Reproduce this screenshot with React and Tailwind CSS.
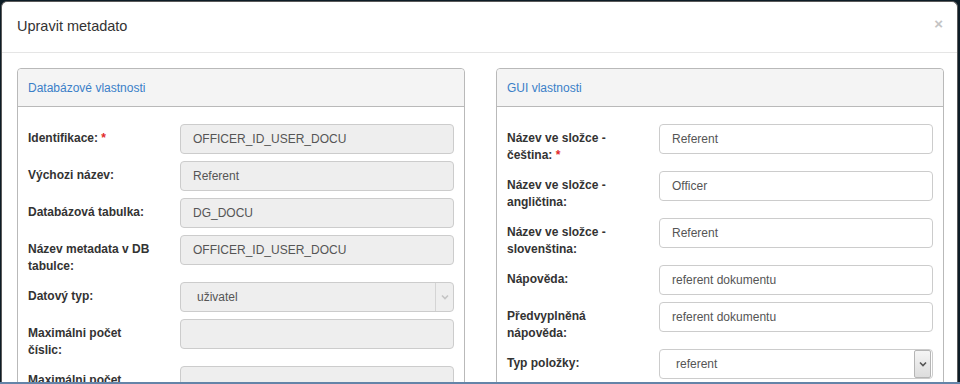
import React from "react";

const leftRows = [
  { label: "Identifikace:", required: true, value: "OFFICER_ID_USER_DOCU" },
  { label: "Výchozi název:", value: "Referent" },
  { label: "Databázová tabulka:", value: "DG_DOCU" },
  { label: "Název metadata v DB tabulce:", value: "OFFICER_ID_USER_DOCU" },
  { label: "Datový typ:", value: "uživatel", select: true },
  { label: "Maximálni počet číslic:", value: "" },
  { label: "Maximálni počet desetinných míst:", value: "" },
];

const rightRows = [
  { label: "Název ve složce - čeština:", required: true, value: "Referent" },
  { label: "Název ve složce - angličtina:", value: "Officer" },
  { label: "Název ve složce - slovenština:", value: "Referent" },
  { label: "Nápověda:", value: "referent dokumentu" },
  { label: "Předvyplněná nápověda:", value: "referent dokumentu" },
  { label: "Typ položky:", value: "referent", select: true },
];

const Chevron = ({ color }) => (
  <svg width="8" height="6" viewBox="0 0 8 6" fill="none">
    <path d="M1 1.5l3 3 3-3" stroke={color} strokeWidth="1.6" />
  </svg>
);

const Field = ({ row, readOnly }) => {
  const base = readOnly
    ? "bg-[#eeeeee] border-[#cccccc]"
    : "bg-white border-[#cccccc]";
  if (row.select) {
    return (
      <div
        className={`flex h-[30px] w-[274px] shrink-0 items-center rounded-[4px] border ${base}`}
      >
        <span className="flex-1 pl-[16px] text-[12px] text-[#555555]">{row.value}</span>
        {readOnly ? (
          <div className="flex h-full w-[18px] items-center justify-center border-l border-[#d4d4d4]">
            <Chevron color="#c4c4c4" />
          </div>
        ) : (
          <div className="mr-[1px] flex h-[28px] w-[17px] items-center justify-center rounded-[2px] border border-[#b5b5b5] bg-gradient-to-b from-[#f5f5f5] to-[#dddddd]">
            <Chevron color="#555555" />
          </div>
        )}
      </div>
    );
  }
  return (
    <div
      className={`flex h-[30px] w-[274px] shrink-0 items-center rounded-[4px] border px-[12px] text-[12px] text-[#555555] ${base}`}
    >
      {row.value}
    </div>
  );
};

const Panel = ({ title, rows, readOnly }) => (
  <div className="w-[448px] shrink-0 rounded-t-[4px] border border-[#b9b9b9] bg-white">
    <div className="flex h-[38px] items-center rounded-t-[4px] border-b border-[#b9b9b9] bg-[#f4f4f4] px-[10px] text-[12px] text-[#3a7fc8]">
      {title}
    </div>
    <div className="flex flex-col gap-[7px] pl-[10px] pr-[9px] pt-[17px]">
      {rows.map((row) => (
        <div key={row.label} className="flex items-start">
          <div className="w-[152px] shrink-0 pr-[24px] pt-[6px] text-[12px] font-bold leading-[17px] text-[#333333]">
            {row.label}
            {row.required && <span className="text-[#e12a2a]"> *</span>}
          </div>
          <Field row={row} readOnly={readOnly} />
        </div>
      ))}
    </div>
  </div>
);

export default function App() {
  return (
    <div
      className="flex h-[384px] w-[960px] flex-col overflow-hidden bg-[#0d1c26]"
      style={{ fontFamily: '"Liberation Sans", Arial, sans-serif' }}
    >
      <div className="ml-[1px] mt-[1px] h-[381px] w-[957px] overflow-hidden rounded-t-[6px] border border-b-0 border-[#5a5a5a] bg-white">
        <div className="flex h-[51px] items-center justify-between border-b border-[#e5e5e5] pl-[15px] pr-[14px]">
          <span className="pb-[1px] text-[14.5px] text-[#333333]">Upravit metadato</span>
          <span className="-mt-[8px] text-[15px] font-bold leading-none text-[#c4c4c4]">×</span>
        </div>
        <div className="flex gap-[31px] px-[15px] pt-[15px]">
          <Panel title="Databázové vlastnosti" rows={leftRows} readOnly />
          <Panel title="GUI vlastnosti" rows={rightRows} />
        </div>
      </div>
      <div className="h-[2px] w-full bg-[#6484a8]" />
    </div>
  );
}
